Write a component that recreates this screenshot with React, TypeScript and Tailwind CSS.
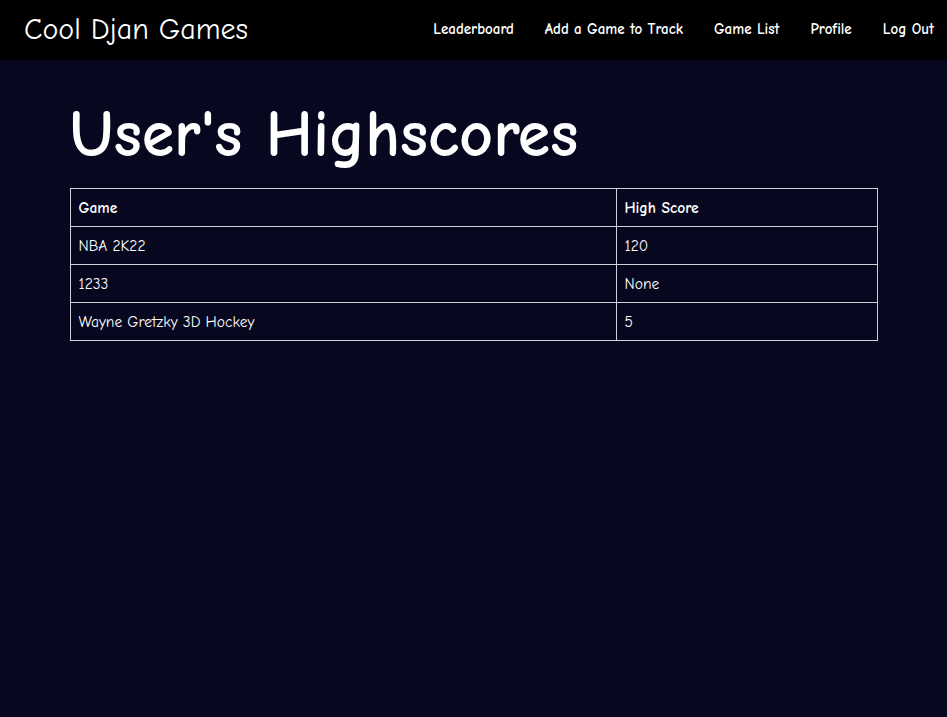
import React from "react";

const rows = [
  ["NBA 2K22", "120"],
  ["1233", "None"],
  ["Wayne Gretzky 3D Hockey", "5"],
];

export default function App() {
  return (
    <div
      className="min-h-[717px] bg-[#07081f] text-white"
      style={{ fontFamily: '"Comic Sans MS", "Comic Neue", "Open Sans", sans-serif' }}
    >
      <nav className="h-[60px] bg-black flex items-center justify-between pl-[24px] pr-[13px]">
        <span className="text-[30px] leading-none">Cool Djan Games</span>
        <div className="flex items-center gap-[31px] text-[15px] font-bold pb-[1px]">
          <span>Leaderboard</span>
          <span>Add a Game to Track</span>
          <span>Game List</span>
          <span>Profile</span>
          <span>Log Out</span>
        </div>
      </nav>
      <main className="w-[808px] mx-auto pt-[35px]">
        <h1 className="text-[66px] leading-[80px] mb-[13px] font-bold">User's Highscores</h1>
        <table className="w-full border-collapse text-[15.5px]">
          <thead>
            <tr className="h-[38px]">
              <th className="border border-[#d0d0d8] text-left font-bold px-[8px] pt-[2px] w-[546px]">Game</th>
              <th className="border border-[#d0d0d8] text-left font-bold px-[8px] pt-[2px]">High Score</th>
            </tr>
          </thead>
          <tbody>
            {rows.map((r) => (
              <tr key={r[0]} className="h-[38px]">
                <td className="border border-[#d0d0d8] px-[8px] pt-[2px]">{r[0]}</td>
                <td className="border border-[#d0d0d8] px-[8px] pt-[2px]">{r[1]}</td>
              </tr>
            ))}
          </tbody>
        </table>
      </main>
    </div>
  );
}
